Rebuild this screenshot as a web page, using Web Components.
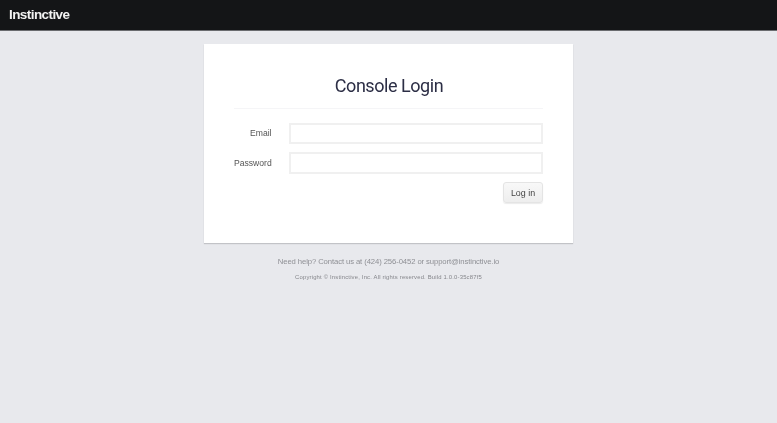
<!DOCTYPE html>
<html lang="en"><head><meta charset="utf-8"><title>Console Login</title>
<style>
html,body{margin:0;height:100%;background:#e8e9ed;font-family:"Liberation Sans",Arial,sans-serif;overflow:hidden}
</style></head><body>
<x-page>
  <x-navbar slot="nav">Instinctive</x-navbar>
  <x-login-card>
    <x-field label="Email" type="email"></x-field>
    <x-field label="Password" type="password"></x-field>
  </x-login-card>
  <x-foot></x-foot>
</x-page>
<script>
function def(name, html, init){
  customElements.define(name, class extends HTMLElement{
    constructor(){super();const r=this.attachShadow({mode:'open'});r.innerHTML=html;if(init)init(this,r);}
    connectedCallback(){ if(this._c) this._c(); }
  });
}
def('x-page',`<style>:host{display:flex;flex-direction:column;align-items:center;height:423px;width:777px;background:#e8e9ed}
::slotted([slot=nav]){align-self:stretch}</style><slot name="nav"></slot><slot></slot>`);
def('x-navbar',`<style>:host{display:flex;align-items:center;height:31px;box-sizing:border-box;background:#141517;border-bottom:1px solid #6a6b6f;padding:0 0 1px 9px;color:#f2f2f2;font:700 13.5px/1 "Liberation Sans",Arial,sans-serif;letter-spacing:-.57px}
span{filter:blur(.3px)}</style><span><slot></slot></span>`);
def('x-login-card',`<style>:host{display:block;box-sizing:border-box;width:369px;height:199px;margin-top:13px;background:#fff;padding:30px 30px 0;box-shadow:0 1px 1px rgba(0,0,0,.16)}
h1{margin:0;font:400 18px/24px Roboto,sans-serif;letter-spacing:-.45px;color:#2c2e45;text-align:center;padding:0 0 10px 1px;border-bottom:1px solid #f5f5f7;margin-bottom:14px;filter:blur(.25px)}
.f{display:flex;flex-direction:column;gap:8px}
.a{display:flex;justify-content:flex-end;margin-top:7px}
button{width:40px;height:21px;box-sizing:border-box;padding:0;border:1px solid #e4e4e4;border-radius:3px;background:linear-gradient(#f8f8f8,#eeeeee);box-shadow:0 1px 1px rgba(0,0,0,.08);color:#444;font:400 8.9px "Liberation Sans",Arial,sans-serif;filter:blur(.25px)}
</style><h1>Console Login</h1><div class="f"><slot></slot></div><div class="a"><button type="button">Log in</button></div>`);
def('x-field',`<style>:host{display:grid;grid-template-columns:38px 254px;justify-content:space-between;align-items:center;height:22px}
label{font:400 8.6px "Liberation Sans",Arial,sans-serif;color:#555;text-align:right;white-space:nowrap;filter:blur(.25px);margin-bottom:2px;padding-right:.5px}
input{box-sizing:border-box;width:254px;height:22px;margin:-1px 0 1px;padding:0 6px;background:#fff;border:2px solid #f0f0f0;outline:0}
:host([label=Email]) input{height:21px;margin:0 0 1px}
</style><label></label><input>`,(h,r)=>{
  h._c=()=>{r.querySelector('label').textContent=h.getAttribute('label');r.querySelector('input').type=h.getAttribute('type');};
});
def('x-foot',`<style>:host{display:block;text-align:center;margin-top:13px;color:#8f9095;filter:blur(.4px)}
p{margin:0}.h{font:400 7.7px/12px "Liberation Sans",Arial,sans-serif;letter-spacing:-.1px}.c{font:400 5.9px/10px "Liberation Sans",Arial,sans-serif;margin-top:4px;letter-spacing:.18px;color:#85868b}
</style><p class="h">Need help? Contact us at (424) 256-0452 or support@instinctive.io</p><p class="c">Copyright © Instinctive, Inc. All rights reserved. Build 1.0.0-35c87f5</p>`);
</script></body></html>
